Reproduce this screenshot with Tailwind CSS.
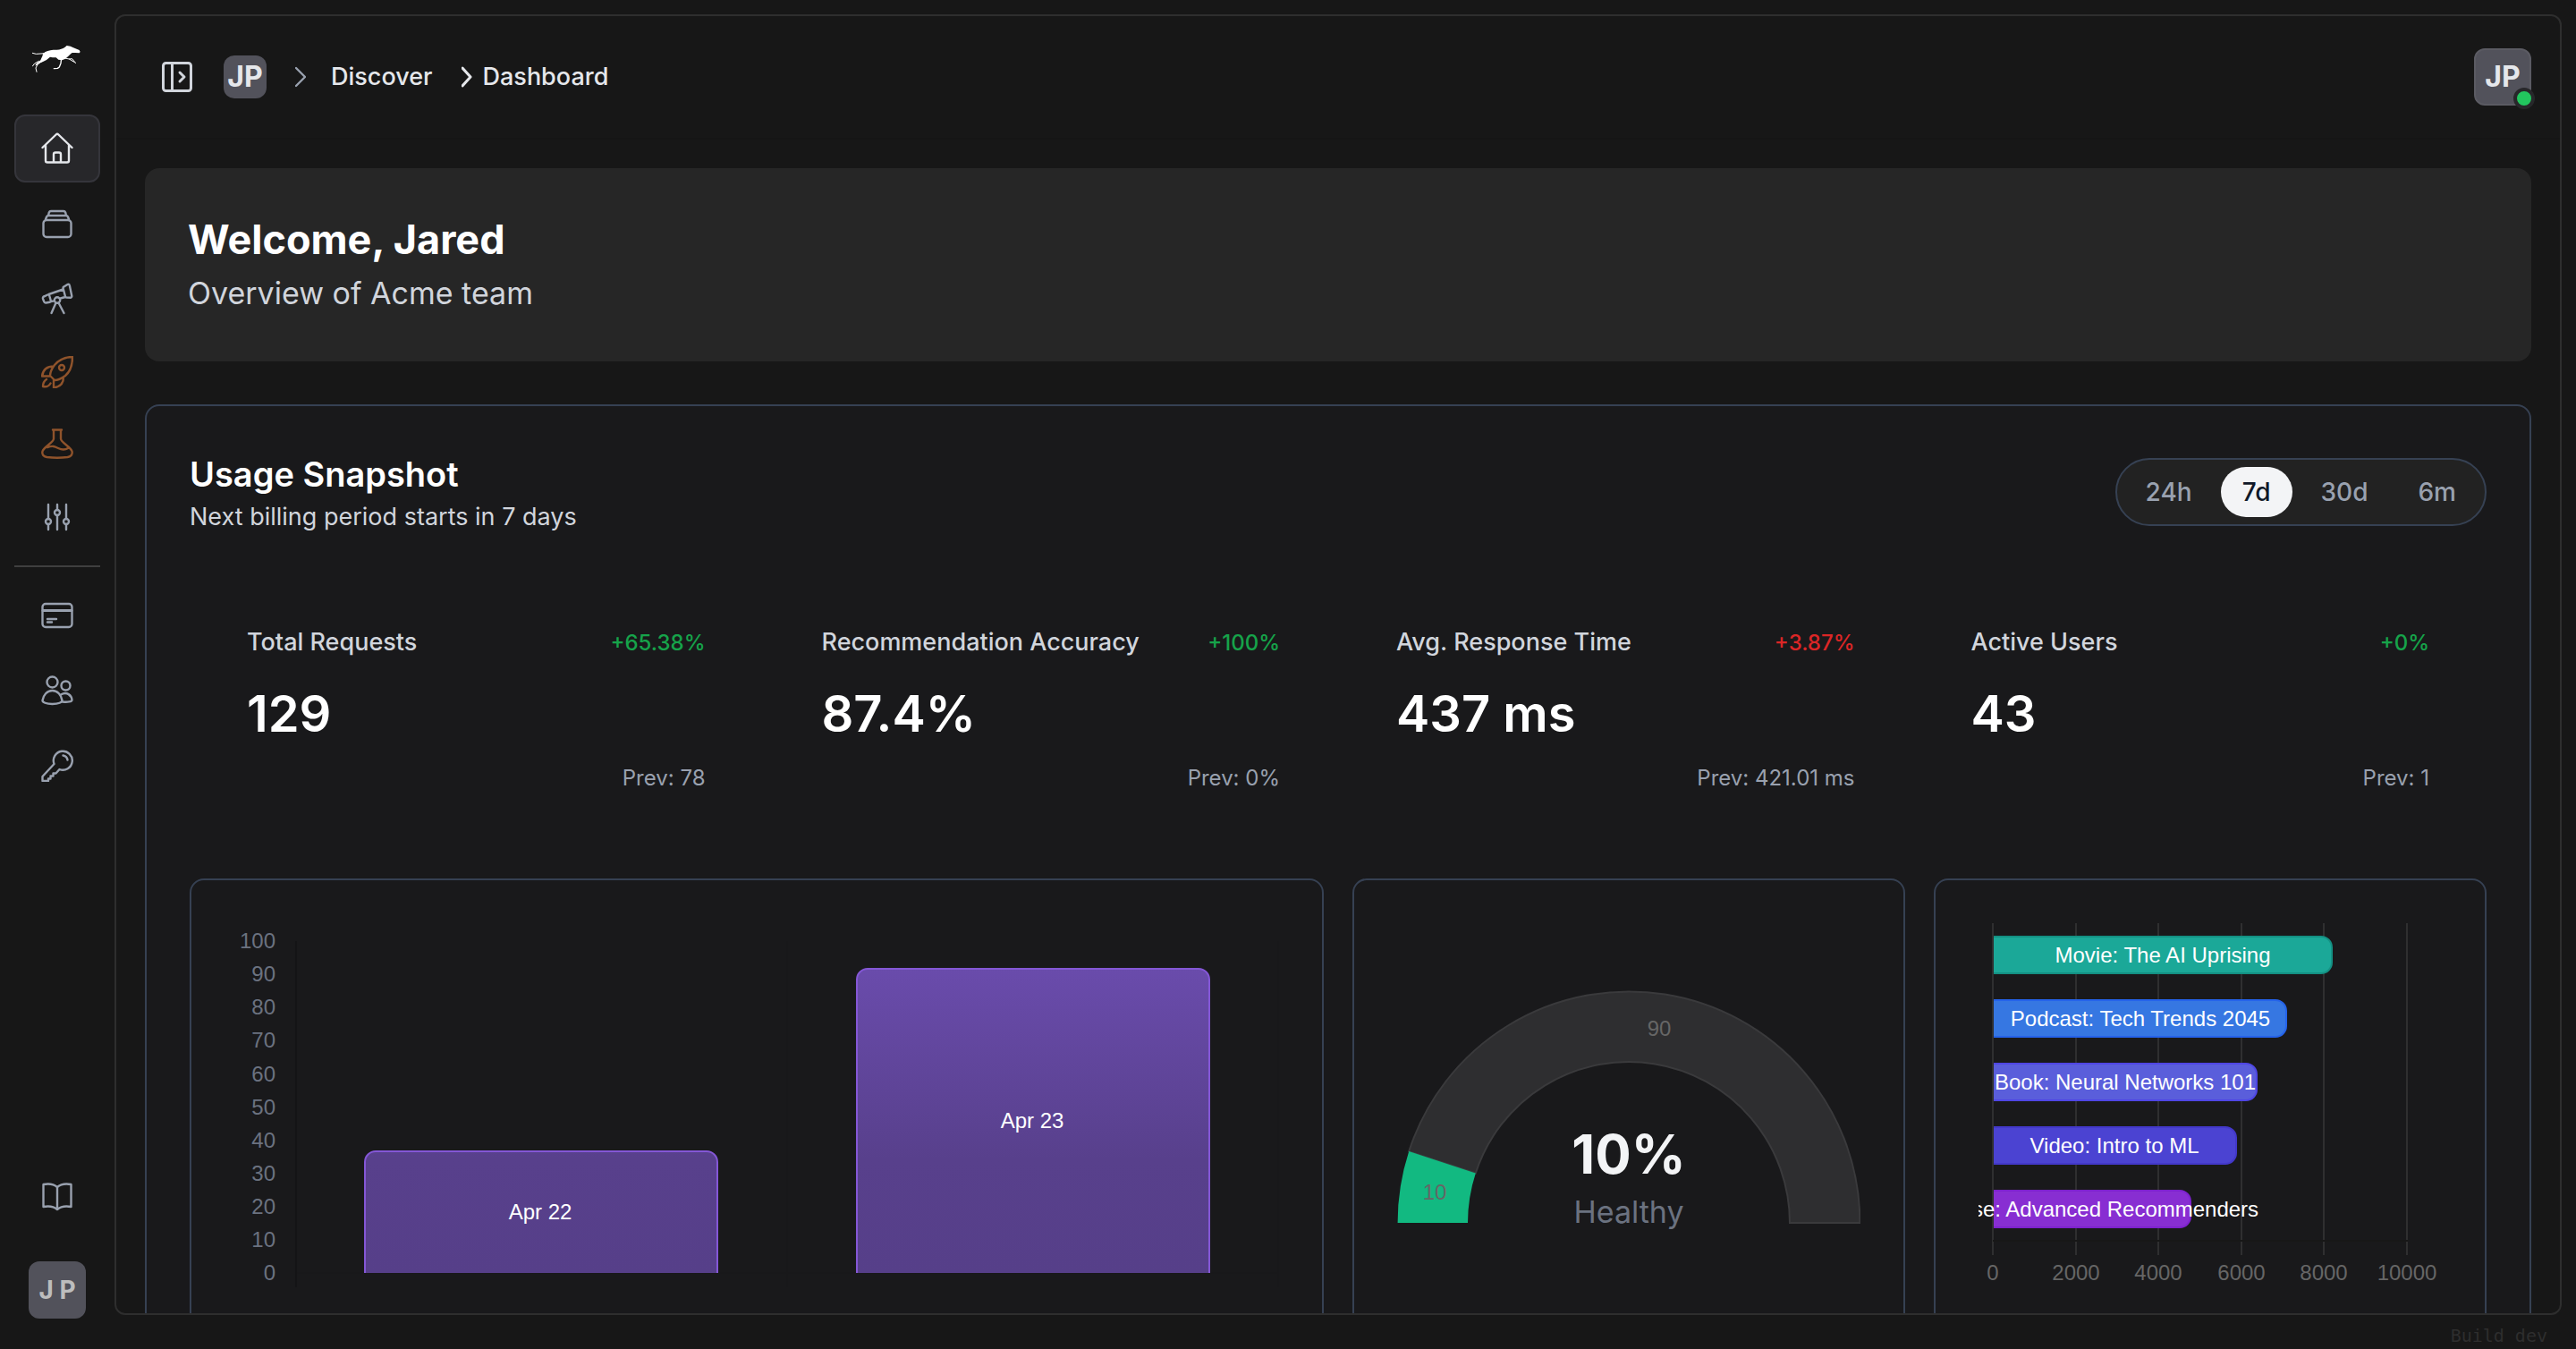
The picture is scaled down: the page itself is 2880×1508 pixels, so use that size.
<!DOCTYPE html>
<html lang="en">
<head>
<meta charset="utf-8">
<title>Dashboard</title>
<script src="https://cdn.jsdelivr.net/npm/@tailwindcss/browser@4"></script>
</head>
<body class="flex h-screen overflow-hidden bg-[#171717] font-['Inter',sans-serif] text-gray-200">

<aside class="flex w-32 shrink-0 flex-col items-center px-4 pb-[34px]">
  <a href="#" aria-label="Home page" class="flex h-32 items-center justify-center">
    <svg class="h-9 w-14" viewBox="108 78 168 108" fill="#fff" stroke="#fff" stroke-linecap="round" stroke-linejoin="round">
      <path stroke="none" d="M144 120l8-6c10-6 22-7 38-7 12-1 20-4 28-9l6-5 12 2 10 5 20 8 3 6-3 4-14-1-10 0c-6 4-10 10-16 14l-8 7-10 4-12-2-8-7-12 0-8-2-12 10-12 6-14 6c-6 6-10 8-12 6 4-8 12-12 18-17 4-10 8-16 8-22z"/>
      <path fill="none" stroke-width="3" d="M109 118l12 3 30-2M130 145l-14 8-7 9M140 146l-14 10-6 12 3 13M212 134l20 4 22 13M232 138l10-1 8 10"/>
      <path fill="none" stroke-width="4" d="M206 134l-2 18-5 13-6 4-12 1"/>
    </svg>
  </a>
  <nav class="flex w-full flex-col gap-2 text-gray-400">
    <a href="#" aria-label="Home" class="flex h-[76px] items-center justify-center rounded-xl border-2 border-[#35353b] bg-[#27272a] text-gray-200">
      <svg class="size-9" viewBox="0 0 36 36" fill="none" stroke="currentColor" stroke-width="2.400" stroke-linecap="round" stroke-linejoin="round"><path d="M1.500 17L16.600 2.500a2 2 0 0 1 2.800 0L34.500 17M5 14v17.500a2 2 0 0 0 2 2h22a2 2 0 0 0 2-2V14M14 33V24.500a2 2 0 0 1 2-2h4a2 2 0 0 1 2 2V33"/></svg>
    </a>
    <a href="#" aria-label="Collections" class="flex h-[76px] items-center justify-center">
      <svg class="size-9" viewBox="0 0 36 36" fill="none" stroke="currentColor" stroke-width="2.400" stroke-linecap="round" stroke-linejoin="round"><path d="M6 14h24a3.500 3.500 0 0 1 3.500 3.500v12A3.500 3.500 0 0 1 30 33H6a3.500 3.500 0 0 1-3.500-3.500v-12A3.500 3.500 0 0 1 6 14zM4.500 14.500l1.500-4A2.500 2.500 0 0 1 8.500 9h19a2.500 2.500 0 0 1 2.500 1.500l1.500 4M8 9l.8-3.500a2.500 2.500 0 0 1 2.200-1.500h14a2.500 2.500 0 0 1 2.200 1.500L28 9"/></svg>
    </a>
    <a href="#" aria-label="Explore" class="flex h-[76px] items-center justify-center">
      <svg class="size-9" viewBox="0 0 36 36" fill="none" stroke="currentColor" stroke-width="2.400" stroke-linecap="round" stroke-linejoin="round"><path d="M25.500 4.500l4-2.500a1.500 1.500 0 0 1 2.300 1L34.300 15a1.500 1.500 0 0 1-1.300 1.700l-4.700-.2a1.500 1.500 0 0 1-1.300-1L24.500 6a1.500 1.500 0 0 1 1-1.500zM24.500 7.500L8.500 13M11 21l4-1M21.500 17.500l5.500-1.500M3.500 15.300l3.700-1.800a1.500 1.500 0 0 1 2 1l1.600 5.500a1.500 1.500 0 0 1-1.200 1.700l-4.200.8a2 2 0 0 1-2.200-1.300L2 18a2 2 0 0 1 1.500-2.700zM14.800 19.500a3.200 3.200 0 1 0 6.400 0 3.200 3.200 0 1 0-6.400 0M16.500 22.500L11.500 34M19.500 22.500l6 11.500"/></svg>
    </a>
    <a href="#" aria-label="Deploy" class="flex h-[72px] items-center justify-center text-[#8f532b]">
      <svg class="size-9" viewBox="0 0 36 36" fill="none" stroke="currentColor" stroke-width="2.400" stroke-linecap="round" stroke-linejoin="round"><path d="M35 1c-9 0-15 3-20 9-3 4-5 8-5 12l5 5c4 0 8-2 12-5 6-5 8-12 8-21zM14 11.500c-8 0-12 4-13 11h9M25 23.500c0 7-4 11-11 12v-9"/><circle cx="23" cy="13" r="3"/><path d="M6 26c-3 2-4 5-4 8 4 1 7-1 8.500-3.500"/></svg>
    </a>
    <a href="#" aria-label="Experiments" class="flex h-[72px] items-center justify-center text-[#8f532b]">
      <svg class="size-9" viewBox="0 0 36 36" fill="none" stroke="currentColor" stroke-width="2.400" stroke-linecap="round" stroke-linejoin="round"><path d="M13 2.500h10M14 2.500v10c0 4-11 9-12.500 14-1 4 2 6 5 6.500 7 1 16 1 23 0 3-.5 6-2.500 5-6.500C33 21.500 22 16.500 22 12.500v-10M7 22c6-2 8-1 12 1s8 2 11 0"/></svg>
    </a>
    <a href="#" aria-label="Settings" class="flex h-[76px] items-center justify-center">
      <svg class="size-9" viewBox="0 0 36 36" fill="none" stroke="currentColor" stroke-width="2.400" stroke-linecap="round"><path d="M8 4v16M8 26v6M18 4v6M18 16v16M28 4v16M28 26v6"/><circle cx="8" cy="23" r="3"/><circle cx="18" cy="13" r="3"/><circle cx="28" cy="23" r="3"/></svg>
    </a>
    <hr class="my-2 border-t-2 border-[#3f3f3f]">
    <a href="#" aria-label="Billing" class="flex h-[76px] items-center justify-center">
      <svg class="size-9" viewBox="0 0 36 36" fill="none" stroke="currentColor" stroke-width="2.400" stroke-linecap="round"><rect x="1.500" y="5" width="33" height="26" rx="3.500"/><path d="M2 12.500h32" stroke-width="3"/><path d="M7 22h10M7 25.500h5"/></svg>
    </a>
    <a href="#" aria-label="Members" class="flex h-[76px] items-center justify-center">
      <svg class="size-9" viewBox="0 0 36 36" fill="none" stroke="currentColor" stroke-width="2.400" stroke-linecap="round" stroke-linejoin="round"><circle cx="12.500" cy="8.500" r="6"/><circle cx="27.500" cy="12.500" r="5"/><path d="M1.500 29c1-6 5-11 11-11s10 5 11 11c0 2-4 4-11 4s-11-2-11-4zM22 22.500c7-4 12 1 12.500 6 0 2-5 2.500-10.500 2"/></svg>
    </a>
    <a href="#" aria-label="API keys" class="flex h-[76px] items-center justify-center">
      <svg class="size-9" viewBox="0 0 36 36" fill="none" stroke="currentColor" stroke-width="2.400" stroke-linecap="round" stroke-linejoin="round"><path d="M14.500 16a10.500 10.500 0 1 1 6 6l-4 4.500h-3v3h-3v3H8V35H1.500v-5z"/><path d="M24.500 6.500c3 .5 4.500 2 5 5"/></svg>
    </a>
  </nav>
  <a href="#" aria-label="Documentation" class="mt-auto flex h-[72px] items-center justify-center text-gray-400">
    <svg class="size-9" viewBox="0 0 36 36" fill="none" stroke="currentColor" stroke-width="2.400" stroke-linecap="round" stroke-linejoin="round"><path d="M18 7C14 3.500 8 3 2.500 4v25c5.500-1 11.500-.5 15.500 3 4-3.500 10-4 15.500-3V4C28 3 22 3.500 18 7zM18 7v25"/></svg>
  </a>
  <button type="button" aria-label="Account" class="mt-9 flex size-16 shrink-0 items-center justify-center rounded-xl bg-[#52525b] text-[28px] font-bold text-[#bdbdbd]">J P</button>
</aside>

<div class="flex min-w-0 flex-1 flex-col pr-4 pt-4">
  <div class="flex min-h-0 flex-1 flex-col overflow-hidden rounded-xl border-2 border-[#2e2e2e]">
    <header class="flex shrink-0 items-center border-b-2 border-[#151515] py-9 pl-12 pr-8">
      <button type="button" aria-label="Toggle sidebar" class="text-gray-300">
        <svg class="size-10" viewBox="0 0 40 40" fill="none" stroke="currentColor" stroke-width="3" stroke-linecap="round" stroke-linejoin="round"><rect x="4.500" y="4.500" width="31" height="31" rx="3"/><path d="M14.500 5v30M23 15l5 5-5 5"/></svg>
      </button>
      <span class="ml-8 flex size-12 items-center justify-center rounded-xl bg-[#52525b] text-[32px] font-bold">JP</span>
      <nav aria-label="Breadcrumb" class="flex items-center text-[27px] font-medium leading-10">
        <svg class="ml-8 h-6 w-3 text-gray-400" viewBox="0 0 12 24" fill="none" stroke="currentColor" stroke-width="2.400" stroke-linecap="round" stroke-linejoin="round"><path d="M1 2l10 10L1 22"/></svg>
        <a href="#" class="ml-7">Discover</a>
        <svg class="ml-8 h-6 w-3" viewBox="0 0 12 24" fill="none" stroke="currentColor" stroke-width="3" stroke-linecap="round" stroke-linejoin="round"><path d="M1 2l9 10L1 22"/></svg>
        <a href="#" class="ml-3">Dashboard</a>
      </nav>
      <button type="button" aria-label="Profile" class="relative ml-auto flex size-16 items-center justify-center rounded-xl border-2 border-[#5b5b63] bg-[#52525b] text-[32px] font-bold">JP
        <span class="absolute -bottom-1.5 -right-1.5 size-6 rounded-full border-4 border-[#27272a] bg-[#22c55e]"></span>
      </button>
    </header>

    <main class="flex min-h-0 flex-1 flex-col gap-12 overflow-hidden p-8">
      <section class="shrink-0 rounded-2xl bg-[#262626] p-12">
        <h1 class="text-[45px] font-bold leading-16 text-white">Welcome, Jared</h1>
        <p class="text-[34px] leading-14 text-gray-300">Overview of Acme team</p>
      </section>

      <section class="shrink-0 rounded-2xl border-2 border-gray-700 bg-[#19191b] p-12">
        <div class="flex items-center justify-between">
          <div>
            <h2 class="text-[38px] font-semibold leading-14 text-white">Usage Snapshot</h2>
            <p class="text-[27px] leading-10 text-gray-300">Next billing period starts in 7 days</p>
          </div>
          <div class="flex gap-2 rounded-full border-2 border-gray-700 bg-[#222] p-2 text-[28px] font-medium text-gray-400">
            <button type="button" class="h-14 rounded-full px-6">24h</button>
            <button type="button" class="h-14 rounded-full bg-gray-100 px-6 text-gray-900">7d</button>
            <button type="button" class="h-14 rounded-full px-6">30d</button>
            <button type="button" class="h-14 rounded-full px-6">6m</button>
          </div>
        </div>

        <div class="my-12 grid grid-cols-4 gap-[2px]">
          <article class="px-16 py-12">
            <div class="flex items-baseline justify-between"><h3 class="text-[27px] font-medium leading-12 text-gray-300">Total Requests</h3><span class="text-2xl font-medium text-[#16a34a]">+65.38%</span></div>
            <p class="mt-4 text-[56px] font-semibold leading-20 text-white">129</p>
            <p class="mt-4 text-right text-2xl text-gray-400">Prev: 78</p>
          </article>
          <article class="px-16 py-12">
            <div class="flex items-baseline justify-between"><h3 class="text-[27px] font-medium leading-12 text-gray-300">Recommendation Accuracy</h3><span class="text-2xl font-medium text-[#16a34a]">+100%</span></div>
            <p class="mt-4 text-[56px] font-semibold leading-20 text-white">87.4%</p>
            <p class="mt-4 text-right text-2xl text-gray-400">Prev: 0%</p>
          </article>
          <article class="px-16 py-12">
            <div class="flex items-baseline justify-between"><h3 class="text-[27px] font-medium leading-12 text-gray-300">Avg. Response Time</h3><span class="text-2xl font-medium text-[#dc2626]">+3.87%</span></div>
            <p class="mt-4 text-[56px] font-semibold leading-20 text-white">437 ms</p>
            <p class="mt-4 text-right text-2xl text-gray-400">Prev: 421.01 ms</p>
          </article>
          <article class="px-16 py-12">
            <div class="flex items-baseline justify-between"><h3 class="text-[27px] font-medium leading-12 text-gray-300">Active Users</h3><span class="text-2xl font-medium text-[#16a34a]">+0%</span></div>
            <p class="mt-4 text-[56px] font-semibold leading-20 text-white">43</p>
            <p class="mt-4 text-right text-2xl text-gray-400">Prev: 1</p>
          </article>
        </div>

        <div class="grid grid-cols-4 gap-8">
          <div class="col-span-2 rounded-2xl border-2 border-gray-700 p-12">
            <svg class="w-full font-['Liberation_Sans',sans-serif]" viewBox="0 0 1168 480" font-size="24" role="img" aria-label="Requests per day">
              <defs><linearGradient id="bar" gradientUnits="userSpaceOnUse" x1="0" y1="20" x2="0" y2="391"><stop offset="0" stop-color="#6c4db0"/><stop offset=".66" stop-color="#58408c"/><stop offset="1" stop-color="#563f89"/></linearGradient></defs>
              <path d="M618 20V407M1167 20V407M69 391H1167" stroke="#18181a" stroke-width="2"/>
              <path d="M69 20V407" stroke="#141416" stroke-width="2"/>
              <g fill="#6b7280" text-anchor="end">
                <text x="46" y="28">100</text><text x="46" y="65">90</text><text x="46" y="102">80</text><text x="46" y="139">70</text><text x="46" y="177">60</text><text x="46" y="214">50</text><text x="46" y="251">40</text><text x="46" y="288">30</text><text x="46" y="325">20</text><text x="46" y="362">10</text><text x="46" y="399">0</text>
              </g>
              <g fill="url(#bar)" stroke="#8457d6" stroke-width="2">
                <path d="M146 391V267a12 12 0 0 1 12-12H528a12 12 0 0 1 12 12V391"/>
                <path d="M696 391V63a12 12 0 0 1 12-12H1078a12 12 0 0 1 12 12V391"/>
              </g>
              <g fill="#fff" text-anchor="middle"><text x="342" y="331">Apr 22</text><text x="892" y="229">Apr 23</text></g>
            </svg>
          </div>
          <div class="rounded-2xl border-2 border-gray-700 p-12">
            <svg class="w-full" viewBox="0 0 518 480" role="img" aria-label="Health gauge">
              <path d="M13.200 255.100A258.400 258.400 0 0 1 517.400 335H439A180 180 0 0 0 87.800 279.400Z" fill="#2e2e30" stroke="#3a3a3c" stroke-width="2"/>
              <path d="M.6 335A258.400 258.400 0 0 1 13.200 255.100L87.800 279.400A180 180 0 0 0 79 335Z" fill="#12b981"/>
              <g font-family="Liberation Sans, sans-serif" font-size="24" fill="#666" text-anchor="middle"><text x="42" y="309">10</text><text x="293" y="126">90</text></g>
              <g text-anchor="middle"><text x="259" y="280" font-size="60" font-weight="700" fill="#f3f4f6">10%</text><text x="259" y="335" font-size="34" fill="#6b7280">Healthy</text></g>
            </svg>
          </div>
          <div class="rounded-2xl border-2 border-gray-700 p-12">
            <svg class="w-full overflow-hidden font-['Liberation_Sans',sans-serif]" viewBox="0 0 518 480" font-size="24" role="img" aria-label="Top content">
              <path d="M16 0V371M109 0V371M201 0V371M294 0V371M386 0V371M479 0V371" stroke="#2f2f30" stroke-width="2"/>
              <path d="M16 355H480" stroke="#171717" stroke-width="2"/>
              <g stroke-width="2">
                <path d="M17 15H383a12 12 0 0 1 12 12V44a12 12 0 0 1-12 12H17" fill="#1ba898" stroke="#149083"/>
                <path d="M17 86H332a12 12 0 0 1 12 12V115a12 12 0 0 1-12 12H17" fill="#3677e2" stroke="#2563eb"/>
                <path d="M17 157H299a12 12 0 0 1 12 12V186a12 12 0 0 1-12 12H17" fill="#5a5edb" stroke="#4f46e5"/>
                <path d="M17 228H276a12 12 0 0 1 12 12V257a12 12 0 0 1-12 12H17" fill="#4b43d2" stroke="#4338ca"/>
                <path d="M17 299H225a12 12 0 0 1 12 12V328a12 12 0 0 1-12 12H17" fill="#882ed2" stroke="#7e22ce"/>
              </g>
              <g fill="#fff" text-anchor="middle">
                <text x="206" y="44">Movie: The AI Uprising</text><text x="181" y="115">Podcast: Tech Trends 2045</text><text x="164" y="186">Book: Neural Networks 101</text><text x="152" y="257">Video: Intro to ML</text><text x="127" y="328">Course: Advanced Recommenders</text>
              </g>
              <g fill="#666" text-anchor="middle">
                <text x="16" y="399">0</text><text x="109" y="399">2000</text><text x="201" y="399">4000</text><text x="294" y="399">6000</text><text x="386" y="399">8000</text><text x="479" y="399">10000</text>
              </g>
            </svg>
          </div>
        </div>
      </section>
    </main>
  </div>
  <footer class="flex h-[38px] shrink-0 items-center justify-end pr-4 pt-2 font-['DejaVu_Sans_Mono',monospace] text-xl text-[#2e2e2e]">Build dev</footer>
</div>
</body>
</html>
